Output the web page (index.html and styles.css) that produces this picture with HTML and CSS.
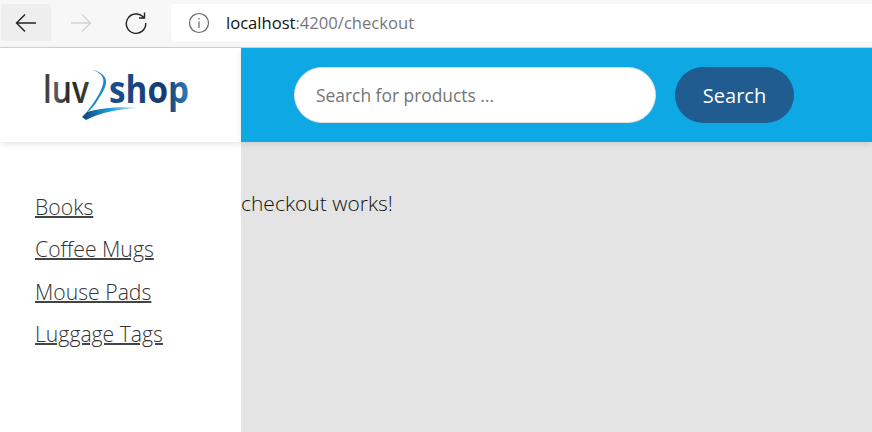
FILE: index.html
```html
<!DOCTYPE html>
<html lang="en">
<head>
  <meta charset="UTF-8" />
  <title>luv2shop</title>
  <link rel="stylesheet" href="styles.css">
</head>
<body>
  <!-- browser toolbar -->
  <div class="toolbar">
    <div class="nav-btn active">
      <svg width="24" height="24" viewBox="0 0 24 24" fill="none" stroke="#222" stroke-width="1.4"><path d="M22 12H2.500M11 3.500 2.500 12l8.500 8.500"/></svg>
    </div>
    <div class="nav-btn">
      <svg width="24" height="24" viewBox="0 0 24 24" fill="none" stroke="#d4d4d4" stroke-width="1.4"><path d="M2 12h19.500M13 3.500l8.500 8.500-8.500 8.500"/></svg>
    </div>
    <div class="nav-btn">
      <svg width="24" height="24" viewBox="0 0 24 24" fill="none" stroke="#222" stroke-width="1.4"><path d="M19.500 6.500A9.700 9.700 0 1 0 21.700 12M20.500 1.500v5.500H15"/></svg>
    </div>
    <div class="address">
      <svg class="info" width="22" height="22" viewBox="0 0 22 22" fill="none" stroke="#666" stroke-width="1.2"><circle cx="11" cy="11" r="9.500"/><path d="M11 9.500v6.500M11 6v1.500"/></svg>
      <span class="host">localhost</span><span class="path">:4200/checkout</span>
    </div>
  </div>

  <div class="page">
    <aside class="sidebar">
      <div class="brand">
        <svg class="logo" width="190" height="70" viewBox="0 -7 190 70">
          <defs>
            <linearGradient id="grey" x1="0" x2="1" y1="0" y2="0">
              <stop offset="0" stop-color="#222"/>
              <stop offset=".2" stop-color="#666"/>
              <stop offset=".6" stop-color="#222"/>
              <stop offset="1" stop-color="#444"/>
            </linearGradient>
            <linearGradient id="swoosh" x1="0" x2="1" y1="0" y2="0">
              <stop offset="0" stop-color="#123f7c"/>
              <stop offset=".5" stop-color="#1d9fdc"/>
              <stop offset="1" stop-color="#cfeaf7"/>
            </linearGradient>
            <linearGradient id="shop" x1="0" x2="1" y1="0" y2="0">
              <stop offset="0" stop-color="#1a4f8c"/>
              <stop offset=".7" stop-color="#163a72"/>
              <stop offset="1" stop-color="#2c7fbe"/>
            </linearGradient>
          </defs>
          <text class="logo-luv" x="0" y="36" textLength="46" lengthAdjust="spacingAndGlyphs" fill="url(#grey)">luv</text>
          <text class="logo-shop" x="66" y="36" textLength="80" lengthAdjust="spacingAndGlyphs" fill="url(#shop)">shop</text>
          <path d="M49 3C57 5 62 10 60 17 58 26 50 37 43 46 48 43 52 38 56 31 60 25 64 18 63 13 62 8 56 4 49 3Z" fill="#1b8ccb"/>
          <path d="M39 50 44 45C58 41 78 39 95 41 76 42 58 45 43 53Z" fill="url(#swoosh)"/>
        </svg>
      </div>
      <nav class="menu">
        <a href="#">Books</a>
        <a href="#">Coffee Mugs</a>
        <a href="#">Mouse Pads</a>
        <a href="#">Luggage Tags</a>
      </nav>
    </aside>

    <main class="main">
      <header class="topbar">
        <input class="search-input" type="text" placeholder="Search for products ..." />
        <button class="search-btn">Search</button>
      </header>
      <p class="content">checkout works!</p>
    </main>
  </div>
</body>
</html>
```

FILE: styles.css
```css
* { margin: 0; padding: 0; box-sizing: border-box; }

body {
  width: 872px;
  height: 432px;
  overflow: hidden;
  background: #fff;
  font-family: "Open Sans", "Noto Sans", sans-serif;
}

/* browser toolbar */
.toolbar {
  height: 48px;
  display: flex;
  align-items: center;
  padding: 0 0 2px 1px;
  background: #f7f7f7;
  border-bottom: 1px solid #d2d2d2;
}
.nav-btn {
  width: 50px;
  height: 37px;
  margin-right: 5px;
  display: flex;
  align-items: center;
  justify-content: center;
  border-radius: 2px;
}
.nav-btn.active { background: #eee; }
.address {
  flex: 1;
  height: 37px;
  margin-left: 5px;
  display: flex;
  align-items: center;
  padding-left: 17px;
  background: #fff;
  border-radius: 4px 0 0 4px;
  font-size: 16.600px;
}
.info { margin-right: 16px; }
.host { color: #111; }
.path { color: #777; }

.page {
  display: flex;
  height: 384px;
}

/* sidebar */
.sidebar {
  width: 241px;
  flex-shrink: 0;
  background: #fff;
}
.brand {
  height: 94px;
  display: flex;
  align-items: center;
  padding-left: 43px;
  box-shadow: 0 2px 6px rgba(0, 0, 0, .1);
}
.logo-luv, .logo-shop { font-size: 38px; font-family: "Open Sans", sans-serif; }
.logo-luv { font-weight: 600; }
.logo-shop { font-weight: 700; }
.menu {
  display: flex;
  flex-direction: column;
  align-items: flex-start;
  gap: 15px;
  padding: 50.700px 0 0 35px;
}
.menu a {
  font-size: 21.200px;
  font-weight: 300;
  line-height: 27.500px;
  color: #333;
  text-decoration-color: #444;
  text-decoration-thickness: 1.500px;
}

/* main area */
.main {
  flex: 1;
  background: #e4e4e4;
}
.topbar {
  height: 94px;
  display: flex;
  align-items: center;
  padding-left: 53px;
  background: #0ea8e5;
  box-shadow: 0 2px 5px rgba(0, 0, 0, .1);
}
.search-input {
  width: 362px;
  height: 56px;
  padding: 0 21px;
  border: 1px solid #ddd;
  border-radius: 28px;
  font: 17.400px "Open Sans", sans-serif;
  outline: none;
}
.search-input::placeholder { color: #757575; opacity: 1; }
.search-btn {
  width: 119px;
  height: 56px;
  margin-left: 19px;
  border: none;
  border-radius: 28px;
  background: #205c90;
  color: #fff;
  font: 20px "Open Sans", sans-serif;
}
.content {
  margin-top: 48px;
  font-size: 21px;
  font-weight: 300;
  line-height: 27px;
  color: #111;
}
```
